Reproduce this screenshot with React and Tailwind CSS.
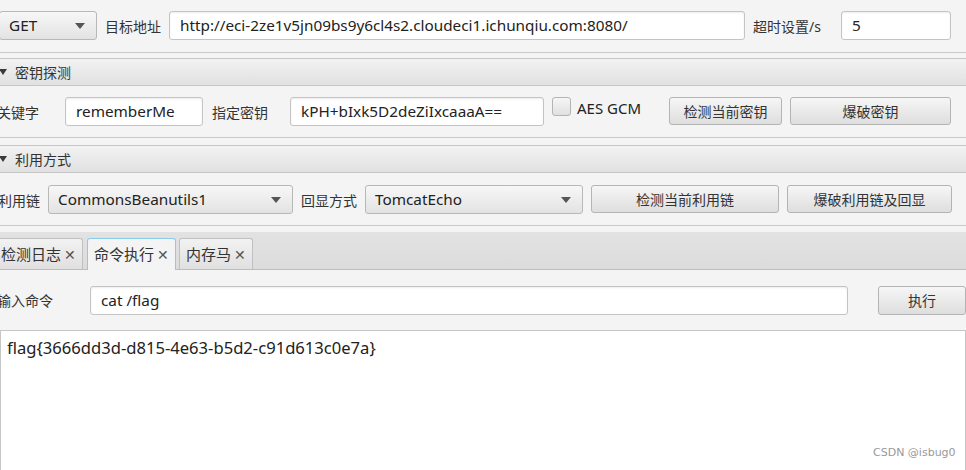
import React from "react";

const FONT = { fontFamily: '"Noto Sans", "Noto Sans CJK SC", sans-serif' };

function Arrow() {
  return (
    <svg width="10" height="6" viewBox="0 0 10 6" className="shrink-0">
      <path d="M0 0 L10 0 L5 6 Z" fill="#555" />
    </svg>
  );
}

function Combo({ w, text, className = "" }) {
  return (
    <div
      className={`h-[29px] flex items-center justify-between shrink-0 border border-[#b8b8b8] rounded-[3px] bg-gradient-to-b from-[#f7f7f7] to-[#e3e3e3] pl-[9px] pr-[11px] text-[15.3px] text-[#222] ${w} ${className}`}
    >
      <span>{text}</span>
      <Arrow />
    </div>
  );
}

function Input({ w, text, h = "h-[29px]", className = "" }) {
  return (
    <div
      className={`${h} flex items-center shrink-0 border border-[#c4c4c4] rounded-[3px] bg-white shadow-[inset_0_1px_2px_rgba(0,0,0,0.08)] pl-[10px] text-[15.3px] text-[#222] whitespace-nowrap ${w} ${className}`}
    >
      {text}
    </div>
  );
}

function Btn({ w, text, className = "" }) {
  return (
    <div
      className={`h-[28px] flex items-center justify-center shrink-0 border border-[#b4b4b4] rounded-[3px] bg-gradient-to-b from-[#f6f6f6] to-[#dedede] text-[14px] text-[#333] ${w} ${className}`}
    >
      {text}
    </div>
  );
}

function Label({ text, className = "" }) {
  return <span className={`text-[14px] text-[#333] shrink-0 whitespace-nowrap ${className}`}>{text}</span>;
}

function TitleBar({ text }) {
  return (
    <div className="h-[28px] flex items-center border-t border-b border-[#c6c6c6] bg-gradient-to-b from-[#f2f2f2] to-[#e1e1e1]">
      <svg width="8" height="6" viewBox="0 0 8 6" className="ml-[-1px]">
        <path d="M0 0 L8 0 L4 6 Z" fill="#3a3a3a" />
      </svg>
      <span className="ml-[8px] text-[14px] text-[#333]">{text}</span>
    </div>
  );
}

function Tab({ text, selected, className = "" }) {
  return (
    <div
      className={`h-[31px] flex items-center pl-[6px] pr-[6px] rounded-t-[3px] text-[15px] text-[#333] ${
        selected
          ? "bg-[#f4f4f4] border border-b-0 border-[#8ccbe8]"
          : "bg-gradient-to-b from-[#f2f2f2] to-[#e0e0e0] border border-b-0 border-[#c0c0c0]"
      } ${className}`}
    >
      <span>{text}</span>
      <span className="ml-[3px] text-[14px] text-[#555]">✕</span>
    </div>
  );
}

export default function App() {
  return (
    <div style={FONT} className="w-[966px] h-[470px] overflow-hidden bg-[#f4f4f4] relative">
      {/* top row */}
      <div className="h-[53px] pt-[11px] border-b border-[#c9c9c9] flex items-start">
        <Combo w="w-[98px]" text="GET" className="-ml-[1px]" />
        <Label text="目标地址" className="ml-[8px] mt-[5px]" />
        <Input w="w-[576px]" text="http://eci-2ze1v5jn09bs9y6cl4s2.cloudeci1.ichunqiu.com:8080/" className="ml-[8px]" />
        <Label text="超时设置/s" className="ml-[8px] mt-[5px]" />
        <Input w="w-[110px]" text="5" className="ml-[20px]" />
      </div>
      <div className="h-[5px]" />
      <TitleBar text="密钥探测" />
      <div className="h-[52px] pt-[11px] border-b border-[#c9c9c9] flex items-start">
        <Label text="关键字" className="ml-[-3px] mt-[5px]" />
        <Input w="w-[138px]" text="rememberMe" className="ml-[26px]" />
        <Label text="指定密钥" className="ml-[9px] mt-[5px]" />
        <Input w="w-[254px]" text="kPH+bIxk5D2deZiIxcaaaA==" className="ml-[22px]" />
        <div className="ml-[8px] w-[19px] h-[19px] rounded-[3px] border border-[#b4b4b4] bg-gradient-to-b from-[#f6f6f6] to-[#e0e0e0]" />
        <span className="ml-[6px] text-[15px] text-[#222]">AES GCM</span>
        <Btn w="w-[113px]" text="检测当前密钥" className="ml-[28px]" />
        <Btn w="w-[161px]" text="爆破密钥" className="ml-[8px]" />
      </div>
      <div className="h-[7px]" />
      <TitleBar text="利用方式" />
      <div className="h-[53px] pt-[12px] border-b border-[#c9c9c9] flex items-start">
        <Label text="利用链" className="ml-[-2px] mt-[5px]" />
        <Combo w="w-[245px]" text="CommonsBeanutils1" className="ml-[8px]" />
        <Label text="回显方式" className="ml-[8px] mt-[5px]" />
        <Combo w="w-[218px]" text="TomcatEcho" className="ml-[8px]" />
        <Btn w="w-[188px]" text="检测当前利用链" className="ml-[8px]" />
        <Btn w="w-[165px]" text="爆破利用链及回显" className="ml-[8px]" />
      </div>
      {/* tabs area */}
      <div className="h-[6px]" />
      <div className="h-[38px] bg-gradient-to-b from-[#e2e2e2] to-[#dcdcdc] flex items-end border-b border-[#bdbdbd]">
        <Tab text="检测日志" className="-ml-[6px]" />
        <Tab text="命令执行" selected className="ml-[4px] -mb-[1px] h-[32px]" />
        <Tab text="内存马" className="ml-[3px]" />
      </div>
      <div className="h-[60px] pt-[16px] flex items-start">
        <Label text="输入命令" className="ml-[-3px] mt-[4px]" />
        <Input w="w-[758px]" h="h-[29px]" text="cat /flag" className="ml-[37px]" />
        <Btn w="w-[88px]" text="执行" className="ml-[30px] h-[29px]" />
      </div>
      <div className="h-[200px] w-[966px] bg-white border border-[#c6c6c6] pl-[6px] pt-[5px] text-[16.6px] text-[#222]">
        flag{"{"}3666dd3d-d815-4e63-b5d2-c91d613c0e7a{"}"}
      </div>
      <div
        className="absolute left-[873px] top-[445px] text-[11px] text-[#999]"
        style={{ fontFamily: '"DejaVu Sans", "Liberation Sans", sans-serif' }}
      >
        CSDN @isbug0
      </div>
    </div>
  );
}
